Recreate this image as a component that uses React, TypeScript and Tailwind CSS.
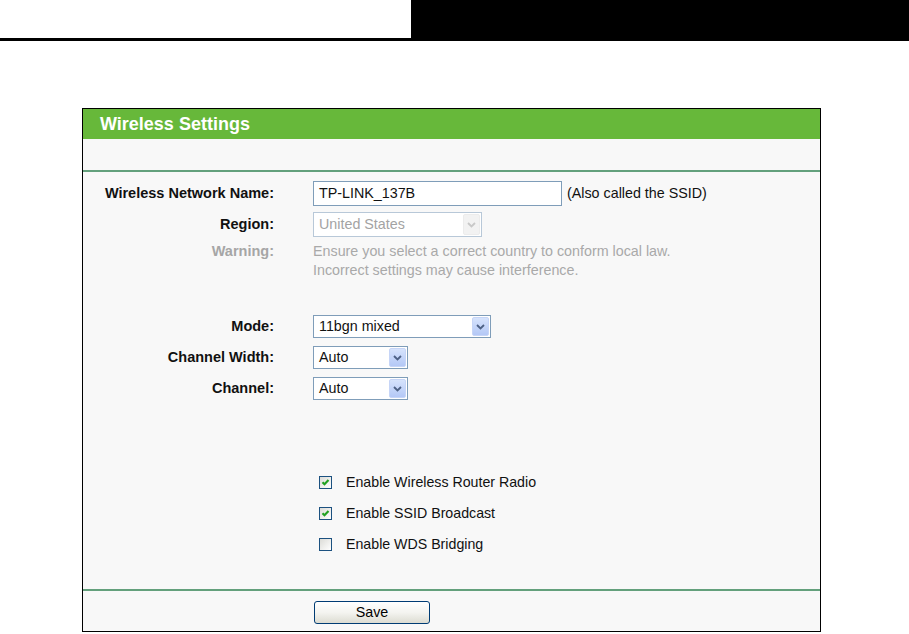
import React from "react";

const FONT = { fontFamily: '"Liberation Sans", Arial, sans-serif' };

function Chevron({ color }: { color: string }) {
  return (
    <svg width="9" height="6" viewBox="0 0 9 6">
      <path d="M1 1 L4.5 4.5 L8 1" fill="none" stroke={color} strokeWidth="1.8" />
    </svg>
  );
}

function XpSelect({ value, width, height, disabled }: { value: string; width: number; height: number; disabled?: boolean }) {
  return (
    <div
      className={`flex items-stretch border bg-white ${disabled ? "border-[#b8c8d8]" : "border-[#7f9db9]"}`}
      style={{ width, height }}
    >
      <div className={`flex-1 flex items-center pl-[5px] text-[14.3px] ${disabled ? "text-[#a3a3a3]" : "text-[#111]"}`}>
        {value}
      </div>
      <div
        className={`w-[17px] m-[1px] flex items-center justify-center rounded-[2px] ${
          disabled
            ? "bg-[#f2f2f2] border border-[#ececec]"
            : "bg-gradient-to-b from-[#d6e3fc] to-[#b4c8f6] border border-[#c6d5f7]"
        }`}
      >
        <Chevron color={disabled ? "#c8c8c8" : "#4d6185"} />
      </div>
    </div>
  );
}

function XpCheckbox({ checked }: { checked: boolean }) {
  return (
    <div className="w-[13px] h-[13px] border border-[#1c5180] bg-gradient-to-br from-[#dcdcd7] to-[#ffffff] flex items-center justify-center">
      {checked && (
        <svg width="9" height="9" viewBox="0 0 9 9">
          <path d="M1.5 4.2 L3.5 6.3 L7.5 2" fill="none" stroke="#21a121" strokeWidth="2.1" />
        </svg>
      )}
    </div>
  );
}

function Label({ children, muted }: { children: React.ReactNode; muted?: boolean }) {
  return (
    <div className={`w-[191px] text-right font-bold text-[14.5px] ${muted ? "text-[#a6a6a6]" : "text-[#111]"}`}>
      {children}
    </div>
  );
}

export default function App() {
  return (
    <div className="w-[909px] h-[634px] bg-white overflow-hidden" style={FONT}>
      {/* page header strip */}
      <div className="flex h-[41px]">
        <div className="w-[411px] flex flex-col justify-end">
          <div className="h-[3px] bg-black" />
        </div>
        <div className="flex-1 bg-black" />
      </div>

      <div className="pl-[82px] pt-[67px]">
        <div className="w-[739px] border border-black bg-[#f8f8f8]">
          <div className="h-[30px] bg-[#67b83a] flex items-center pl-[17px]">
            <span className="text-white font-bold text-[18px]">Wireless Settings</span>
          </div>
          <div className="h-[31px]" />
          <div className="h-[2px] bg-[#63a07c]" />

          <div className="pt-[9px] pb-[29px]">
            <div className="flex items-center h-[25px]">
              <Label>Wireless Network Name:</Label>
              <div className="ml-[39px] w-[249px] h-[25px] border border-[#7f9db9] bg-white flex items-center pl-[5px] text-[14.3px] text-[#111]">
                TP-LINK_137B
              </div>
              <span className="ml-[5px] text-[14.3px] text-[#111]">(Also called the SSID)</span>
            </div>

            <div className="flex items-center h-[25px] mt-[6px]">
              <Label>Region:</Label>
              <div className="ml-[39px]">
                <XpSelect value="United States" width={169} height={25} disabled />
              </div>
            </div>

            <div className="flex mt-[5px] leading-[19px]">
              <Label muted>Warning:</Label>
              <div className="ml-[39px] text-[14.3px] text-[#a9a9a9]">
                Ensure you select a correct country to conform local law.
                <br />
                Incorrect settings may cause interference.
              </div>
            </div>

            <div className="flex items-center h-[23px] mt-[35px]">
              <Label>Mode:</Label>
              <div className="ml-[39px]">
                <XpSelect value="11bgn mixed" width={178} height={23} />
              </div>
            </div>

            <div className="flex items-center h-[23px] mt-[8px]">
              <Label>Channel Width:</Label>
              <div className="ml-[39px]">
                <XpSelect value="Auto" width={95} height={23} />
              </div>
            </div>

            <div className="flex items-center h-[23px] mt-[8px]">
              <Label>Channel:</Label>
              <div className="ml-[39px]">
                <XpSelect value="Auto" width={95} height={23} />
              </div>
            </div>

            <div className="mt-[67px]">
              {[
                { label: "Enable Wireless Router Radio", checked: true },
                { label: "Enable SSID Broadcast", checked: true },
                { label: "Enable WDS Bridging", checked: false },
              ].map((c) => (
                <div key={c.label} className="flex items-center h-[31px] pl-[236px]">
                  <XpCheckbox checked={c.checked} />
                  <span className="ml-[14px] text-[14.2px] text-[#111]">{c.label}</span>
                </div>
              ))}
            </div>
          </div>

          <div className="h-[2px] bg-[#63a07c]" />
          <div className="h-[40px] pt-[9px] pl-[231px]">
            <button className="w-[116px] h-[23px] rounded-[3px] border border-[#003c74] bg-gradient-to-b from-[#ffffff] via-[#f4f4f0] to-[#dcdcd2] text-[14.3px] text-black">
              Save
            </button>
          </div>
        </div>
      </div>
    </div>
  );
}
